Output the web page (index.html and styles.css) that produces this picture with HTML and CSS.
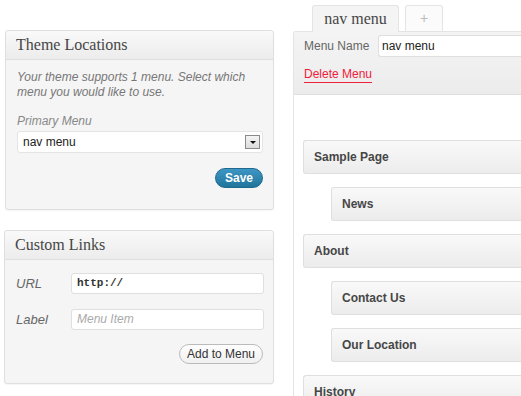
FILE: index.html
```html
<!DOCTYPE html>
<html lang="en">
<head>
    <meta charset="UTF-8">
    <title>Menus</title>
    <link rel="stylesheet" href="styles.css">
</head>
<body>

<div class="page">
    <div class="sidebar">
        <div class="postbox">
            <h3 class="postbox-title">Theme Locations</h3>
            <div class="postbox-inside">
                <p class="howto">Your theme supports 1 menu. Select which menu you would like to use.</p>
                <label class="field-label">Primary Menu</label>
                <div class="select-box">
                    <span>nav menu</span>
                    <span class="select-arrow"></span>
                </div>
                <div class="actions">
                    <a class="button-primary">Save</a>
                </div>
            </div>
        </div>

        <div class="postbox postbox-links">
            <h3 class="postbox-title">Custom Links</h3>
            <div class="postbox-inside">
                <div class="link-row">
                    <span class="row-label">URL</span>
                    <div class="text-input mono">http://</div>
                </div>
                <div class="link-row">
                    <span class="row-label">Label</span>
                    <div class="text-input placeholder">Menu Item</div>
                </div>
                <div class="actions">
                    <a class="button-secondary">Add to Menu</a>
                </div>
            </div>
        </div>
    </div>

    <div class="menu-management">
        <div class="nav-tabs">
            <a class="nav-tab active">nav menu</a>
            <a class="nav-tab add-tab">+</a>
        </div>
        <div class="menu-edit">
            <div class="menu-header">
                <div class="menu-name-row">
                    <span class="menu-name-label">Menu Name</span>
                    <div class="menu-name-input">nav menu</div>
                </div>
                <a class="delete-menu">Delete Menu</a>
            </div>
            <div class="menu-body">
                <ul class="menu-items">
                    <li class="menu-item">Sample Page</li>
                    <li class="menu-item depth-1">News</li>
                    <li class="menu-item">About</li>
                    <li class="menu-item depth-1">Contact Us</li>
                    <li class="menu-item depth-1">Our Location</li>
                    <li class="menu-item">History</li>
                </ul>
            </div>
        </div>
    </div>
</div>

</body>
</html>
```

FILE: styles.css
```css
/* Basic reset */
* {
    margin: 0;
    padding: 0;
    box-sizing: border-box;
}

body {
    font-family: 'Liberation Sans', Arial, sans-serif;
    font-size: 12px;
    color: #333;
    background-color: #fff;
    overflow: hidden;
    width: 521px;
    height: 396px;
}

.page {
    display: flex;
    align-items: flex-start;
}

/* Left column */
.sidebar {
    width: 274px;
    padding: 30px 0 0 5px;
    flex-shrink: 0;
}

.postbox {
    background-color: #f5f5f5;
    border: 1px solid #dfdfdf;
    border-radius: 3px;
    box-shadow: 0 1px 1px rgba(0,0,0,0.04);
    height: 180px;
}

.postbox-links {
    margin-top: 20px;
    margin-left: -1px;
    height: 154px;
}

.postbox-title {
    font-family: 'Liberation Serif', Georgia, serif;
    font-weight: normal;
    font-size: 16px;
    color: #464646;
    height: 29px;
    line-height: 28px;
    padding-left: 10px;
    background: linear-gradient(to bottom, #f9f9f9, #ececec);
    border-bottom: 1px solid #dfdfdf;
    border-radius: 3px 3px 0 0;
}

.postbox-inside {
    padding: 10px 10px 0 11px;
}

.howto {
    font-style: italic;
    color: #777;
    line-height: 15px;
    margin-bottom: 14px;
}

.field-label {
    display: block;
    font-style: italic;
    color: #888;
    margin-bottom: 3px;
}

.select-box {
    display: flex;
    align-items: center;
    justify-content: space-between;
    height: 22px;
    background-color: #fff;
    border: 1px solid #e4e4e4;
    border-radius: 3px;
    padding: 0 2px 0 5px;
    color: #222;
}

.select-arrow {
    width: 15px;
    height: 14px;
    border: 1px solid #8a8a8a;
    background: linear-gradient(to bottom, #f4f4f4, #dcdcdc);
    position: relative;
}

.select-arrow:after {
    content: '';
    position: absolute;
    left: 4px;
    top: 5px;
    border-left: 3px solid transparent;
    border-right: 3px solid transparent;
    border-top: 3px solid #111;
}

.actions {
    display: flex;
    justify-content: flex-end;
    margin-top: 15px;
}

.button-primary {
    background: linear-gradient(to bottom, #3d96c4, #21759b);
    border: 1px solid #1e6a8e;
    color: #fff;
    font-weight: bold;
    font-size: 12px;
    height: 20px;
    line-height: 18px;
    padding: 0 9px;
    border-radius: 11px;
}

/* Custom links */
.link-row {
    display: flex;
    align-items: center;
    margin-bottom: 15px;
}

.postbox-links .postbox-inside {
    padding-top: 13px;
}

.row-label {
    width: 55px;
    font-style: italic;
    color: #666;
    font-size: 13px;
}

.text-input {
    flex: 1;
    height: 21px;
    line-height: 19px;
    background-color: #fff;
    border: 1px solid #dfdfdf;
    border-radius: 3px;
    padding-left: 5px;
    margin-right: -1px;
}

.mono {
    font-family: 'Liberation Mono', 'Courier New', monospace;
    font-weight: bold;
    color: #333;
    font-size: 11px;
}

.placeholder {
    font-style: italic;
    color: #aaa;
}

.postbox-links .actions {
    margin-top: -1px;
}

.button-secondary {
    background: linear-gradient(to bottom, #fefefe, #f0f0f0);
    border: 1px solid #bbb;
    color: #333;
    font-size: 12px;
    height: 20px;
    line-height: 18px;
    padding: 0 7px;
    border-radius: 11px;
}

/* Right column */
.menu-management {
    margin-left: 19px;
    width: 400px;
    flex-shrink: 0;
}

.nav-tabs {
    display: flex;
    padding: 5px 0 0 19px;
    gap: 6px;
}

.nav-tab {
    height: 26px;
    border: 1px solid #e4e4e4;
    border-bottom: none;
    border-radius: 3px 3px 0 0;
    background-color: #f4f4f4;
    font-family: 'Liberation Serif', Georgia, serif;
    font-size: 16px;
    line-height: 25px;
    text-align: center;
    color: #464646;
}

.nav-tab.active {
    width: 87px;
    background-color: #f4f4f4;
    position: relative;
    margin-bottom: -1px;
    height: 27px;
}

.add-tab {
    width: 38px;
    color: #bbb;
    background-color: #fbfbfb;
    font-family: 'Liberation Sans', Arial, sans-serif;
    font-size: 14px;
}

.menu-edit {
    border: 1px solid #e4e4e4;
    border-right: none;
    border-bottom: none;
    border-radius: 3px 0 0 0;
}

.menu-header {
    background: linear-gradient(to bottom, #f4f4f4, #ececec);
    border-bottom: 1px solid #dfdfdf;
    height: 63px;
    padding: 3px 0 0 10px;
}

.menu-name-row {
    display: flex;
    align-items: center;
}

.menu-name-label {
    color: #666;
    width: 74px;
}

.menu-name-input {
    flex: 1;
    height: 22px;
    line-height: 20px;
    background-color: #fff;
    border: 1px solid #dfdfdf;
    border-right: none;
    border-radius: 3px 0 0 3px;
    padding-left: 3px;
    color: #222;
}

.delete-menu {
    display: inline-block;
    margin-top: 10px;
    color: #f0203c;
    font-size: 12px;
    padding-bottom: 1px;
    border-bottom: 1px solid #f0203c;
    line-height: 14px;
}

.menu-body {
    background-color: #fff;
    padding: 45px 0 0 9px;
}

.menu-items {
    list-style-type: none;
}

.menu-item {
    height: 34px;
    line-height: 32px;
    margin-bottom: 13px;
    padding-left: 10px;
    font-weight: bold;
    color: #464646;
    background: linear-gradient(to bottom, #f9f9f9, #ececec);
    border: 1px solid #dfdfdf;
    border-right: none;
    border-radius: 3px 0 0 3px;
}

.menu-item.depth-1 {
    margin-left: 28px;
}
```
